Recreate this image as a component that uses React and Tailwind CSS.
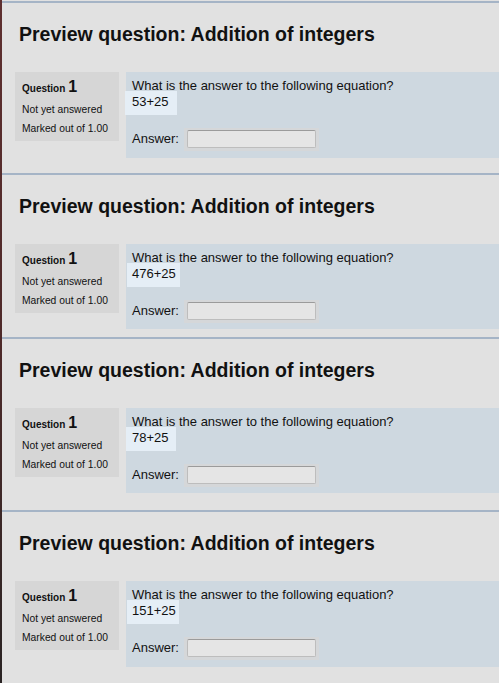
const PREVIEWS = [
  {
    id: 1,
    sum: "53+25",
    box: "h-[86px]",
    after: "pb-[15px]",
    mark: "ml-[-7px] w-[52px] pl-[7px]",
  },
  {
    id: 2,
    sum: "476+25",
    box: "h-[85px]",
    after: "pb-[8px]",
    mark: "ml-[-5px] w-[53px] pl-[5px]",
  },
  {
    id: 3,
    sum: "78+25",
    box: "h-[85px]",
    after: "pb-[17px]",
    mark: "ml-[-6px] w-[50px] pl-[6px]",
  },
  {
    id: 4,
    sum: "151+25",
    box: "h-[86px]",
    after: "pb-[16px]",
    mark: "ml-[-5px] w-[52px] pl-[5px]",
  },
];

function QuestionInfo() {
  return (
    <div className="w-[104px] h-[69px] shrink-0 bg-[#d6d6d6] pl-[7px] pt-[7px] text-[#111]">
      <div className="flex items-baseline leading-[16px]">
        <span className="text-[10px] font-bold">Question&nbsp;</span>
        <span className="text-[16px] font-bold">1</span>
      </div>
      <div className="mt-[7px] text-[10.3px] leading-[12px]">Not yet answered</div>
      <div className="mt-[7px] text-[10.3px] leading-[12px]">Marked out of 1.00</div>
    </div>
  );
}

function Preview({ item }) {
  return (
    <section className={`border-t-2 border-[#a5b4c6] ${item.after}`}>
      <h2 className="pl-[17px] pt-[21px] text-[19.5px] leading-[20px] font-bold text-[#111]">
        Preview question: Addition of integers
      </h2>

      <div className="mt-[28px] flex gap-[7px] pl-[13px]">
        <QuestionInfo />

        <div className={`flex-1 bg-[#ced8e0] pl-[6px] pt-[6px] text-[13px] leading-[16px] text-[#111] ${item.box}`}>
          <div>What is the answer to the following equation?</div>
          <div className="mt-[-3px]">
            <span className={`block bg-[#e5eef6] pt-[3px] pb-[5px] ${item.mark}`}>{item.sum}</span>
          </div>

          <div className="mt-[13px] flex">
            <span className="mt-[3px]">Answer:</span>
            <div className="ml-[5px] h-[23px] w-[135px] bg-[#d5d7d9] pl-[3px] pr-[3px] pt-[2px]">
              <input
                type="text"
                className="block h-[18px] w-[129px] rounded-[2px] border border-[#bdbdbd] border-t-[#9b9b9b] bg-[#e5e5e5] outline-none"
              />
            </div>
          </div>
        </div>
      </div>
    </section>
  );
}

export default function App() {
  return (
    <div
      className="flex h-[683px] w-[499px] overflow-hidden bg-[#e1e1e1]"
      style={{ fontFamily: '"Liberation Sans", Arial, sans-serif' }}
    >
      <div className="w-[2px] shrink-0 bg-gradient-to-b from-[#5e2f2f] via-[#4e2a2a] to-[#2a2424]" />
      <div className="flex-1 pt-[1px]">
        {PREVIEWS.map((item) => (
          <Preview key={item.id} item={item} />
        ))}
      </div>
    </div>
  );
}
